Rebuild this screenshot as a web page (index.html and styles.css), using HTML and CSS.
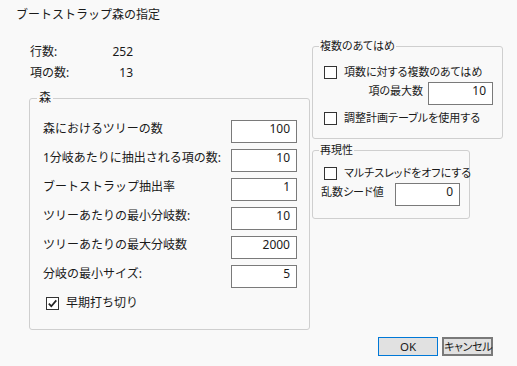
FILE: index.html
```html
<!DOCTYPE html>
<html lang="ja">
<head>
<meta charset="utf-8">
<link rel="stylesheet" href="styles.css">
</head>
<body>
<div class="dialog">
  <div class="title">ブートストラップ森の指定</div>
  <div class="main">
    <div class="left">
      <div class="info">
        <div class="info-row"><span class="info-label">行数:</span><span class="info-value">252</span></div>
        <div class="info-row"><span class="info-label">項の数:</span><span class="info-value">13</span></div>
      </div>
      <fieldset class="group forest">
        <legend>森</legend>
        <div class="forest-body">
          <div class="row"><span class="label">森におけるツリーの数</span><div class="field">100</div></div>
          <div class="row"><span class="label">1分岐あたりに抽出される項の数:</span><div class="field">10</div></div>
          <div class="row"><span class="label">ブートストラップ抽出率</span><div class="field">1</div></div>
          <div class="row"><span class="label">ツリーあたりの最小分岐数:</span><div class="field">10</div></div>
          <div class="row"><span class="label">ツリーあたりの最大分岐数</span><div class="field">2000</div></div>
          <div class="row"><span class="label">分岐の最小サイズ:</span><div class="field">5</div></div>
          <div class="check early">
            <span class="box"><svg width="11" height="11" viewBox="0 0 11 11"><path d="M1.8 5.6 L4.3 8.2 L9.3 2.4" fill="none" stroke="#222" stroke-width="1.7"/></svg></span>
            <span>早期打ち切り</span>
          </div>
        </div>
      </fieldset>
    </div>
    <div class="right">
      <fieldset class="group multi">
        <legend>複数のあてはめ</legend>
        <div class="multi-body">
          <div class="check"><span class="box"></span><span>項数に対する複数のあてはめ</span></div>
          <div class="maxrow"><span class="label-small">項の最大数</span><div class="field">10</div></div>
          <div class="check check2"><span class="box"></span><span>調整計画テーブルを使用する</span></div>
        </div>
      </fieldset>
      <fieldset class="group repro">
        <legend>再現性</legend>
        <div class="repro-body">
          <div class="check"><span class="box"></span><span>マルチスレッドをオフにする</span></div>
          <div class="seedrow"><span class="label-small">乱数シード値</span><div class="field">0</div></div>
        </div>
      </fieldset>
    </div>
  </div>
  <div class="footer">
    <button class="btn ok">OK</button>
    <button class="btn cancel">キャンセル</button>
  </div>
</div>
</body>
</html>
```

FILE: styles.css
```css
* { box-sizing: border-box; }
html, body {
  margin: 0;
  padding: 0;
  background: #f9f9f9;
}
body {
  width: 517px;
  height: 366px;
  overflow: hidden;
  font-family: "Noto Sans", "Noto Sans CJK JP", sans-serif;
  font-size: 12px;
  color: #1a1a1a;
  white-space: nowrap;
}
.dialog {
  padding: 6px 0 0 16px;
}
.title {
  font-size: 12px;
  line-height: 18px;
}
.main {
  display: flex;
  margin-top: 14px;
  margin-left: 13px;
}
.left {
  width: 281px;
}
.info {
  padding-top: 3px;
  padding-left: 1px;
}
.info-row {
  display: flex;
  line-height: 21px;
}
.info-label { width: 70px; }
.info-value { width: 33px; text-align: right; }

.group {
  margin: 0;
  padding: 0;
  border: 1px solid #cfcfcf;
  border-radius: 3px;
  min-width: 0;
}
.group legend {
  margin-left: 7px;
  padding: 0 2px;
  line-height: 16px;
}
.forest {
  margin-top: 7px;
  width: 281px;
  height: 240px;
}
.forest-body {
  padding: 14px 12px 0 13px;
  display: flex;
  flex-direction: column;
  gap: 6px;
}
.row {
  display: flex;
  align-items: flex-start;
}
.label {
  flex: 1;
  line-height: 14px;
  padding-top: 2px;
}
.field {
  width: 66px;
  height: 23px;
  border: 1px solid #7a7a7a;
  background: #fff;
  text-align: right;
  padding: 1px 6px 0 0;
  line-height: 14px;
  font-size: 12px;
}
.check {
  display: flex;
  align-items: center;
  height: 16px;
  line-height: 16px;
}
.box {
  width: 13px;
  height: 13px;
  border: 1px solid #333;
  background: #fff;
  margin-right: 7px;
  display: flex;
  align-items: center;
  justify-content: center;
  flex: none;
}
.early {
  margin-top: 1px;
  padding-left: 3px;
}
.right {
  margin-left: 2px;
  font-size: 11px;
  font-feature-settings: "palt";
}
.multi {
  width: 191px;
  height: 101px;
}
.multi legend { margin-left: 6px; padding: 0 1px; }
.multi-body {
  padding: 10px 9px 0 11px;
}
.maxrow {
  display: flex;
  justify-content: flex-end;
  align-items: flex-start;
  gap: 5px;
  margin-top: 2px;
}
.label-small {
  line-height: 14px;
  padding-top: 2px;
}
.maxrow .field, .seedrow .field { width: 65px; }
.check2 { margin-top: 5px; }
.repro {
  margin-top: 3px;
  width: 158px;
  height: 77px;
}
.repro legend { margin-left: 6px; padding: 0 1px; }
.repro-body {
  padding: 7px 9px 0 11px;
}
.seedrow {
  display: flex;
  align-items: flex-start;
  justify-content: space-between;
  margin-top: 2px;
  margin-left: -3px;
}
.footer {
  display: flex;
  justify-content: flex-end;
  gap: 4px;
  padding-right: 24px;
  margin-top: 7px;
}
.btn {
  font-family: "Noto Sans", "Noto Sans CJK JP", sans-serif;
  font-size: 11.5px;
  font-feature-settings: "palt";
  color: #1a1a1a;
  height: 19px;
  line-height: 15px;
  padding: 0;
  background: #e1e1e1;
  border: 1px solid #adadad;
  border-radius: 0;
  white-space: nowrap;
}
.ok {
  width: 60px;
  border-color: #0078d7;
}
.cancel {
  width: 51px;
  border: 2px solid #7a7a7a;
  font-size: 11px;
  letter-spacing: -0.3px;
}
```
